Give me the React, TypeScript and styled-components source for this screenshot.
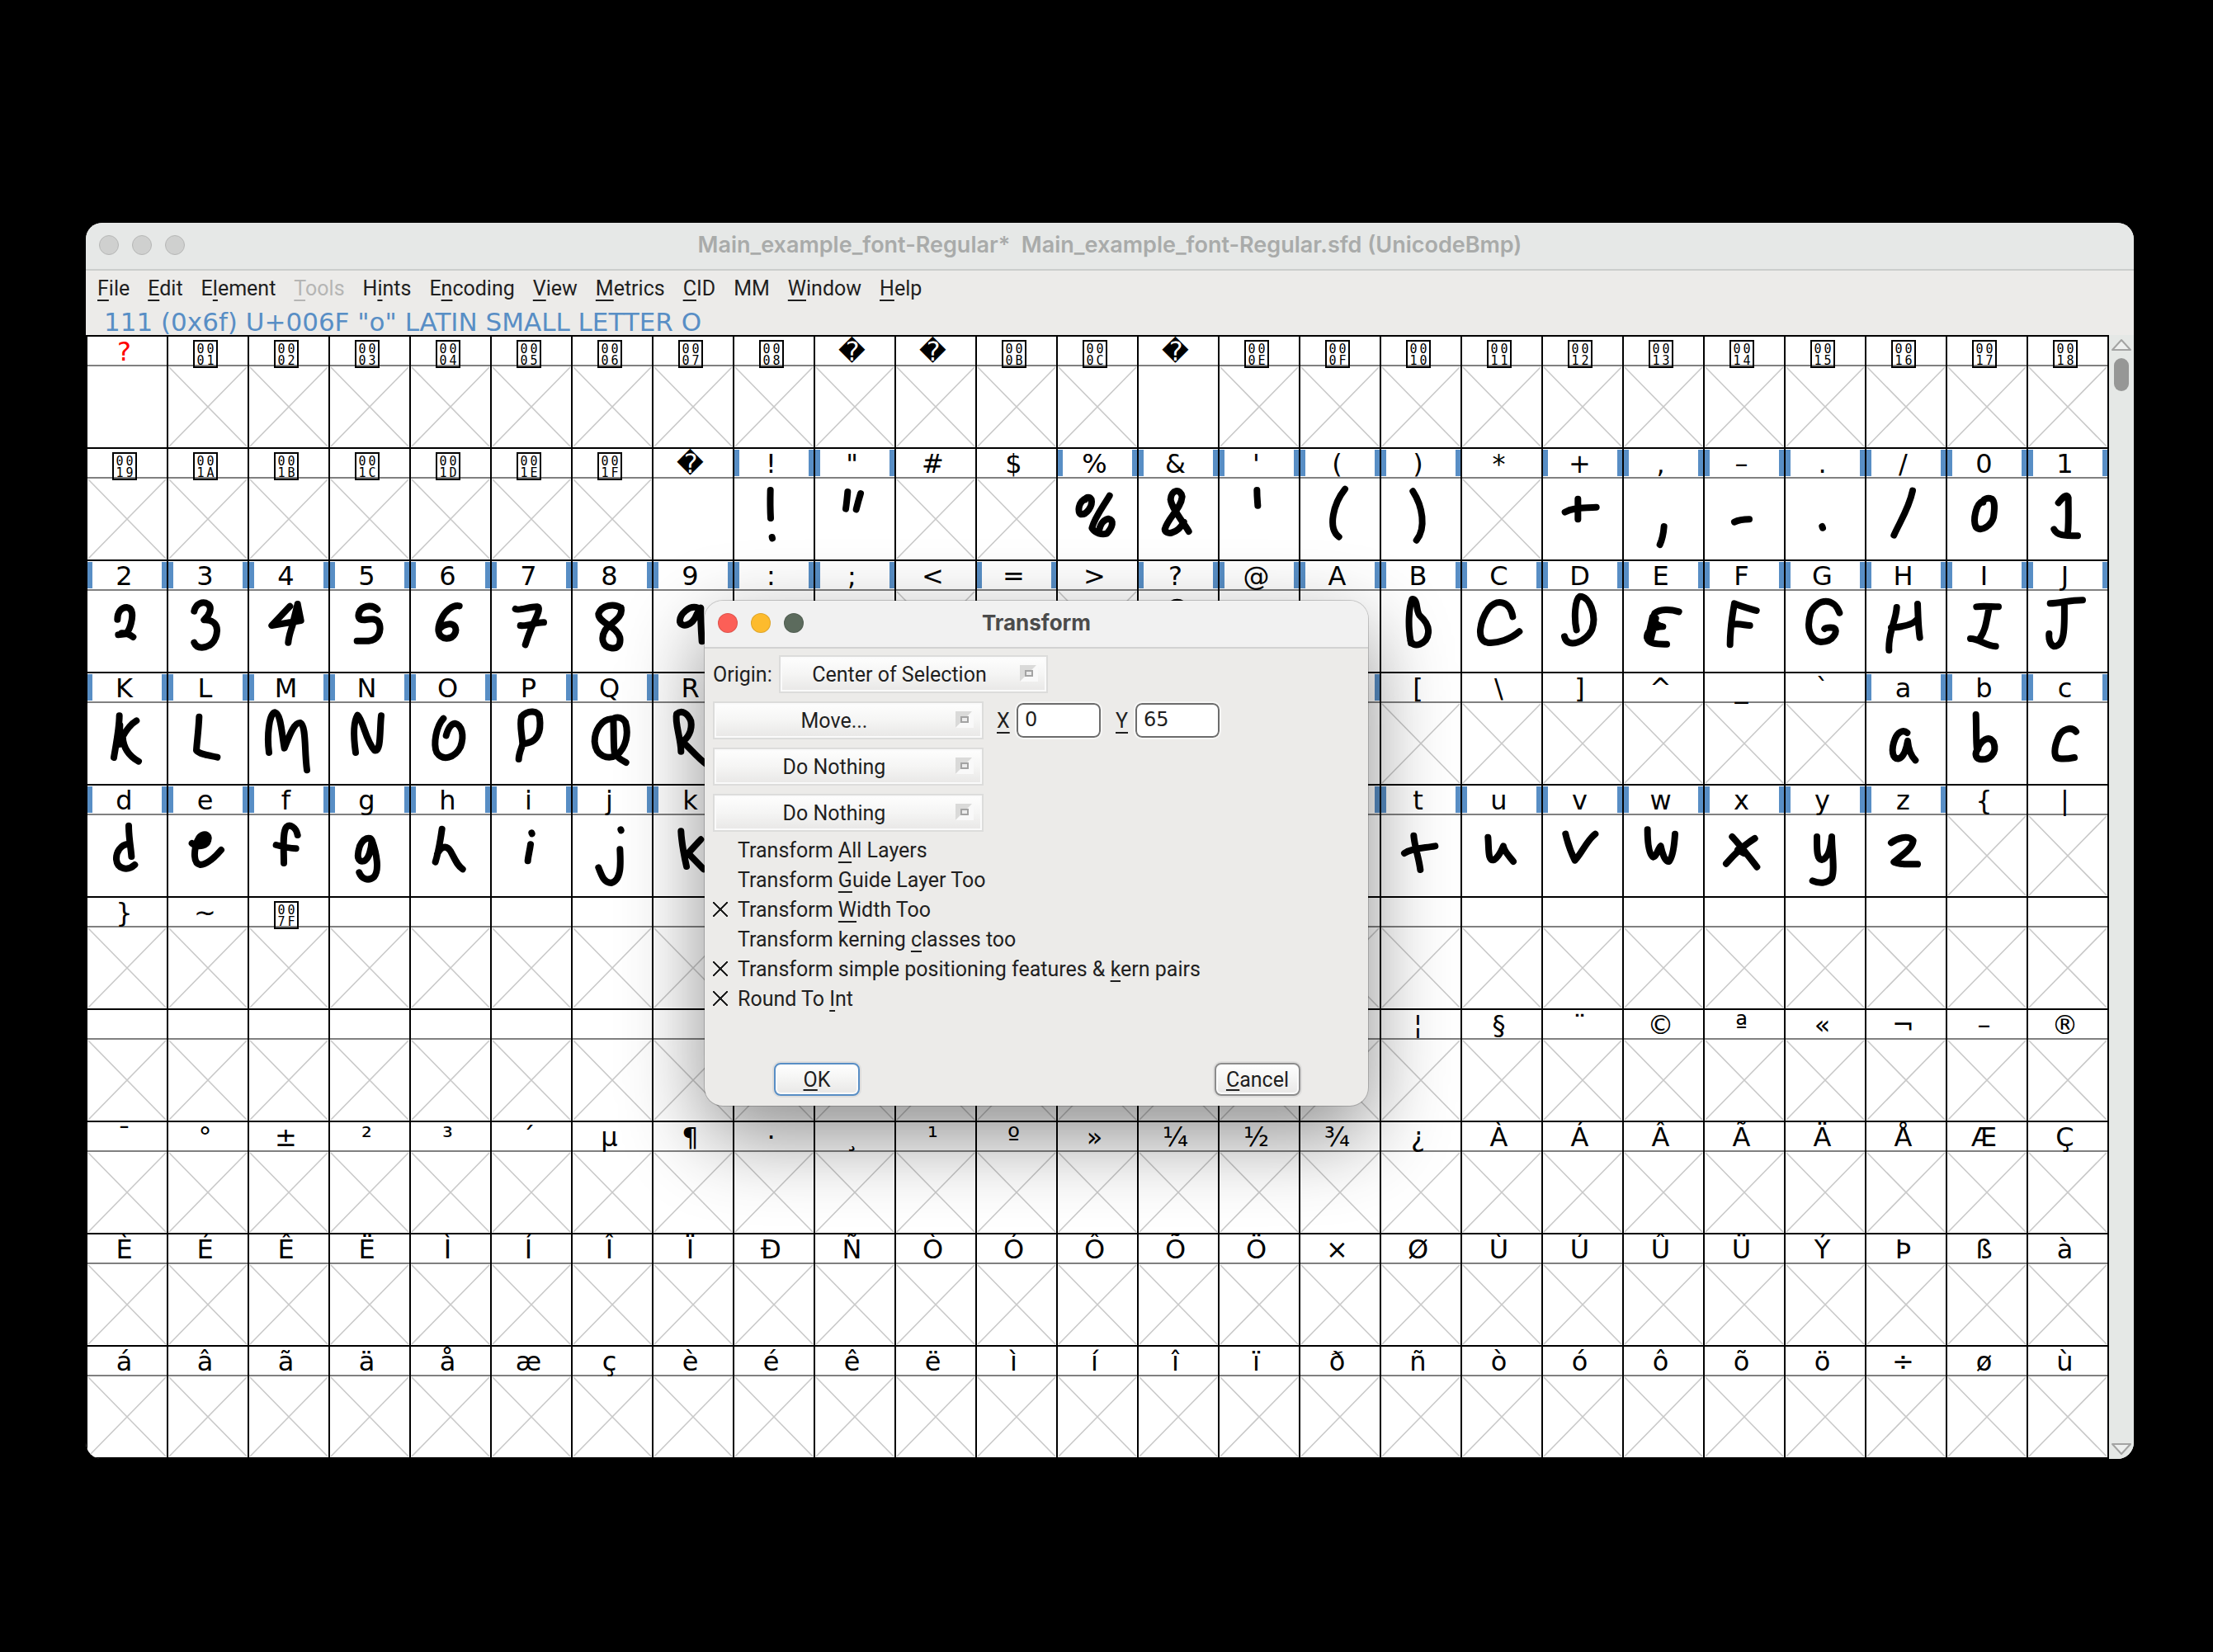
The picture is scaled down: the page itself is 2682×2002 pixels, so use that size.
import React from 'react';
import styled, { createGlobalStyle, css } from 'styled-components';

const ink = '#1f1f1f';
const panel = '#ecebe9';
const accent = '#588ec5';
const uiFont = 'Roboto, "Liberation Sans", sans-serif';
const titleFont = 'Inter, "Liberation Sans", sans-serif';
const glyphFont = '"DejaVu Sans", "Noto Sans", sans-serif';

const GlobalStyle = createGlobalStyle`
  *, *::before, *::after { box-sizing: border-box; }
  body { margin: 0; background: #000; color: ${ink}; font-family: ${uiFont}; font-size: 25px; }
  button, input, select { font: inherit; color: inherit; margin: 0; }
  u { text-decoration-thickness: 2px; text-underline-offset: 5px; text-decoration-skip-ink: none; }
`;

const Desktop = styled.main`
  min-height: 100vh;
  padding: 270px 96px 234px 104px;
`;

const AppWindow = styled.section`
  position: relative;
  border-radius: 20px;
  overflow: hidden;
  background: ${panel};
`;

const TitleBar = styled.header<{ $active?: boolean }>`
  display: grid;
  grid-template-columns: 1fr auto 1fr;
  align-items: center;
  height: 58px;
  padding: 0 16px 2px;
  border-bottom: 2px solid ${(p) => (p.$active ? '#d2d2d2' : '#cbcdcc')};
  background: ${(p) => (p.$active ? '#f1f1f1' : '#e6e8e7')};
`;

const Title = styled.h1<{ $active?: boolean }>`
  margin: 0;
  font: 600 27px/32px ${titleFont};
  white-space: pre;
  color: #a9abaa;
  ${(p) =>
    p.$active &&
    css`
      font-size: 26px;
      font-weight: 700;
      color: #4b4b4b;
    `}
`;

const Lights = styled.div`
  display: flex;
  gap: 16px;
`;

const Light = styled.button<{ $color?: string }>`
  width: 24px;
  height: 24px;
  padding: 0;
  border: 1px solid ${(p) => (p.$color ? 'rgba(0, 0, 0, 0.12)' : '#b6b7b6')};
  border-radius: 50%;
  background: ${(p) => p.$color ?? '#cfd0cf'};
`;

const MenuBar = styled.nav`
  display: flex;
  align-items: center;
  gap: 22px;
  height: 47px;
  padding: 0 12px 4px 14px;
`;

const MenuItem = styled.button`
  padding: 0;
  border: 0;
  background: none;
  line-height: 32px;
  &:disabled { color: #b5b5b4; }
`;

const GlyphInfo = styled.p`
  margin: 0;
  padding-left: 22px;
  font: 31px/31px ${glyphFont};
  color: ${accent};
`;

const Content = styled.div`
  display: grid;
  grid-template-columns: 1fr 30px;
`;

const GlyphGrid = styled.div`
  display: grid;
  grid-template-columns: repeat(25, minmax(0, 1fr));
  padding-left: 2px;
  border-bottom: 2px solid #000;
  background: #000;
`;

const Cell = styled.div`
  border-top: 2px solid #000;
  border-right: 2px solid #000;
  background: #fff;
`;

const CellLabel = styled.div<{ $changed: boolean; $missing: boolean }>`
  position: relative;
  display: flex;
  justify-content: center;
  height: 36px;
  padding-right: 7px;
  border-bottom: 2px solid #808080;
  font: 32px/36px ${glyphFont};
  color: ${(p) => (p.$missing ? '#f00' : '#000')};
  background: ${(p) =>
    p.$changed
      ? `linear-gradient(${accent}, ${accent}) 0 1px / 6px 32px no-repeat,
         linear-gradient(${accent}, ${accent}) 100% 1px / 6px 32px no-repeat`
      : 'none'};
`;

const HexBox = styled.span`
  position: absolute;
  top: 4px;
  left: calc(50% - 18px);
  display: grid;
  grid-template-columns: 12px 12px;
  grid-auto-rows: 14px;
  justify-content: center;
  justify-items: center;
  width: 30px;
  height: 34px;
  padding-top: 2px;
  border: 2px solid #000;
  font: 15px/14px "DejaVu Sans Mono", "Liberation Mono", monospace;
`;

const Drawing = styled.svg`
  display: block;
  width: 100%;
  height: 98px;
`;

const ScrollBar = styled.div`
  display: flex;
  flex-direction: column;
  align-items: center;
  padding: 4px 0;
  background: #e5e8e6;
`;

const ScrollThumb = styled.div`
  width: 18px;
  height: 40px;
  margin: 8px 0 auto;
  border-radius: 9px;
  background: #969796;
`;

const Dialog = styled.section`
  position: absolute;
  top: 458px;
  left: 750px;
  width: 804px;
  border-radius: 22px;
  background: ${panel};
  box-shadow: 0 0 0 1px rgba(0, 0, 0, 0.18), 0 36px 100px rgba(0, 0, 0, 0.45);
`;

const DialogTitleBar = styled(TitleBar)`
  border-radius: 22px 22px 0 0;
`;

const DialogBody = styled.form`
  display: flex;
  flex-direction: column;
  gap: 10px;
  padding: 8px 10px 12px;
`;

const Field = styled.div`
  display: flex;
  align-items: center;
`;

const OriginLabel = styled.label`
  width: 80px;
`;

const SelectFrame = styled.div<{ $width: number }>`
  position: relative;
  width: ${(p) => p.$width}px;
`;

const DropDown = styled.select`
  display: block;
  appearance: none;
  width: 100%;
  height: 46px;
  padding: 0 42px 0 8px;
  border: 2px solid #dcdcdb;
  border-radius: 0;
  box-shadow: inset 0 0 0 2px #fafafa;
  background: linear-gradient(#fefefe, #f5f5f4 50%, #e8e7e6);
  text-align: center;
  text-align-last: center;
`;

const SelectMark = styled.svg`
  position: absolute;
  top: 12px;
  right: 12px;
  pointer-events: none;
`;

const AxisLabel = styled.label`
  width: 24px;
  margin-left: 16px;
`;

const NumberBox = styled.input`
  width: 102px;
  height: 42px;
  margin-right: 2px;
  padding: 0 8px 2px;
  border: 2px solid #6c6c6c;
  border-radius: 8px;
  outline: 2px solid #f6f6f5;
  background: #fff;
  font: 24px/32px ${glyphFont};
`;

const CheckList = styled.div`
  display: flex;
  flex-direction: column;
  margin: -6px 0 50px;
`;

const CheckRow = styled.label`
  display: flex;
  align-items: center;
  gap: 12px;
  height: 36px;
  white-space: pre;
`;

const CheckBox = styled.input`
  appearance: none;
  width: 18px;
  height: 18px;
  &:checked {
    background:
      linear-gradient(45deg, transparent 46%, ${ink} 47%, ${ink} 53%, transparent 54%),
      linear-gradient(-45deg, transparent 46%, ${ink} 47%, ${ink} 53%, transparent 54%);
  }
`;

const Actions = styled.div`
  display: flex;
  justify-content: space-between;
  padding: 0 72px 0 74px;
`;

const PushButton = styled.button<{ $primary?: boolean }>`
  width: 104px;
  height: 40px;
  padding: 2px 0 0;
  border: 2px solid ${(p) => (p.$primary ? accent : '#8c8c8c')};
  border-radius: 8px;
  box-shadow: inset 0 0 0 2px #fbfbfb, 0 0 0 2px #dedddc;
  background: linear-gradient(#fff, #f4f4f3 50%, #e8e7e6);
  line-height: 34px;
  u { text-underline-offset: 3px; }
`;

/* Pen strokes of the drawn glyphs, in thirds of a pixel of the cell body. */
const STROKES: Record<string, string> = {
  '!': 'M131 42C130 80 130 110 132 144M137 213L138 217',
  '"': 'M118 48C116 70 114 90 111 110M165 54C160 70 154 92 149 112',
  '%': 'M102 72C74 84 70 124 84 130C104 132 128 100 122 76C116 66 104 66 100 76M188 62C166 100 134 140 124 180C136 200 160 204 178 200C200 176 206 150 184 146C164 150 154 170 150 188',
  '&': 'M182 192C164 160 120 110 116 76C118 40 152 34 158 66C154 110 108 140 95 184C96 206 140 204 164 158',
  "'": 'M136 42C136 66 138 84 139 98',
  '(': 'M162 38C120 90 98 180 140 212',
  ')': 'M115 46C150 100 164 180 128 224',
  '+': 'M127 74L127 148M80 122C110 104 150 108 194 104',
  ',': 'M146 174C144 200 140 220 131 240',
  '–': 'M108 158C124 150 140 148 162 148',
  '.': 'M133 174L135 179',
  '/': 'M168 44C154 110 120 160 100 206',
  '0': 'M130 82C104 90 92 150 104 176C124 196 160 170 168 140C172 110 174 84 162 74C146 68 130 74 130 86',
  '1': 'M110 88C122 74 140 50 146 70C146 120 148 160 144 196M94 184C104 206 130 208 180 208',
  '2': 'M109 104C109 78 122 60 143 60C165 62 166 90 158 120C152 142 145 152 138 157L112 160M124 154C140 152 155 160 166 168',
  '3': 'M94 74C100 46 126 36 144 48C162 62 148 90 130 106C160 104 178 120 177 145C175 185 150 205 122 206C108 206 98 198 94 188',
  '4': 'M148 56L82 126L188 108L176 48L162 104L174 100L176 48C170 110 146 140 142 188',
  '5': 'M172 68C158 50 126 52 110 70C98 90 102 106 124 106C150 102 172 98 180 122C186 150 176 178 140 182L98 182',
  '6': 'M176 55C150 50 124 76 112 100C94 134 94 170 130 173C160 172 168 145 160 130C148 114 118 122 106 136',
  '7': 'M86 66C100 74 140 56 166 58C180 62 160 100 146 130C136 154 128 176 122 196M104 126C130 130 160 114 189 115',
  '8': 'M176 62C150 44 104 52 94 84C94 118 160 126 172 170C176 200 160 212 140 208C108 204 100 170 120 140C146 112 184 96 176 62',
  '9': 'M162 62C130 50 94 86 96 112C102 134 140 130 158 84L172 62C170 110 174 150 176 184',
  '?': 'M112 62C124 34 156 34 168 62',
  B: 'M108 190C96 130 100 60 112 30C136 30 124 78 142 92C186 130 176 180 140 194C124 200 112 196 106 180',
  C: 'M184 94C174 36 128 28 96 64C64 110 50 180 92 188C130 192 176 176 208 148',
  D: 'M122 142C112 100 116 30 134 20C170 20 196 90 178 140C160 184 88 214 78 166',
  E: 'M200 76C170 66 130 66 112 82C100 104 116 126 142 130C110 132 84 140 84 170C90 196 126 194 156 194M104 96L90 160M116 100L98 176',
  F: 'M92 196C92 140 100 90 108 46C130 56 160 64 188 72M102 122C130 118 146 126 164 126',
  G: 'M196 80C176 24 118 26 92 78C72 140 94 184 128 186C176 186 196 140 172 134C160 134 148 132 142 138',
  H: 'M110 60C108 110 78 150 82 216M90 134C120 132 164 128 182 106M186 48C188 100 188 130 194 170',
  I: 'M106 58C130 54 160 58 186 58M152 62C142 110 140 140 120 170M84 174C110 172 140 200 176 202',
  J: 'M80 46C120 44 150 34 198 34M132 44C130 110 140 200 94 202C80 196 74 176 76 156',
  K: 'M116 46C116 90 104 150 96 198M178 64C158 76 140 100 128 122C130 160 150 192 186 212M118 80L116 150',
  L: 'M112 50C110 100 104 140 102 172C116 188 150 190 178 197',
  M: 'M72 180C64 120 72 36 94 34C116 40 118 110 128 164C142 130 162 68 186 72C208 84 200 170 210 244',
  N: 'M93 180C86 130 84 70 100 44C120 60 130 140 162 172C186 180 180 100 186 46',
  O: 'M118 56C92 84 80 150 94 180C116 212 160 200 180 160C196 116 184 80 160 74C144 76 134 96 128 118',
  P: 'M98 204C98 186 106 170 112 150C110 110 100 80 108 50C130 24 172 26 174 54C180 100 170 146 112 148',
  Q: 'M140 58C104 60 80 100 80 140C84 196 130 206 160 190C196 160 204 110 192 70C176 44 148 52 148 60C150 110 148 150 152 180C164 200 176 206 194 216',
  R: 'M100 176C100 130 76 70 84 40C104 22 126 40 136 66C142 100 124 130 104 140C130 160 160 200 192 222',
  a: 'M148 108C132 94 112 108 104 130C88 170 94 206 118 202C140 194 148 150 150 138C152 160 160 190 178 208',
  b: 'M104 42C106 90 104 140 108 170C124 134 150 116 168 142C184 184 150 210 118 204C100 200 100 180 112 166',
  c: 'M174 104C158 84 122 94 110 124C94 160 90 200 114 202C130 204 150 202 168 198',
  d: 'M150 38C150 80 158 120 160 150M150 104C120 106 104 134 105 160C108 196 146 204 172 180',
  e: 'M86 102C110 120 146 112 146 82C142 62 116 68 106 92C92 130 90 176 116 180C144 178 170 152 192 126M112 98L134 88',
  f: 'M176 72C170 42 148 32 136 42C120 60 126 120 126 174M98 108C120 114 148 120 170 121',
  g: 'M152 92C146 74 120 84 108 112C96 150 100 172 124 166C142 158 150 120 152 90C170 140 180 200 160 224C138 242 114 230 106 208',
  h: 'M113 50C106 100 98 140 89 170M96 140C110 112 130 108 144 130C160 160 168 182 188 196',
  i: 'M145 64L146 67M141 106C138 130 132 150 131 166',
  j: 'M175 52L176 55M172 124C174 170 180 236 140 246C112 246 104 214 94 190',
  k: 'M100 58C102 100 112 150 120 186M172 88L126 138L182 196',
  t: 'M118 74C122 120 136 150 142 198M84 138C110 120 150 120 196 112',
  u: 'M94 80C98 120 92 170 116 162C136 150 146 120 150 112C152 130 172 150 186 168',
  v: 'M82 68C92 110 104 140 116 164C140 140 160 90 190 68',
  w: 'M86 52C86 100 90 140 106 152C120 150 124 120 134 112C140 140 150 170 164 168C180 150 184 100 186 68',
  x: 'M100 78C130 110 160 150 190 188M182 84C140 110 100 150 78 176M120 126L142 138',
  y: 'M114 78C114 120 112 160 132 162C154 156 164 120 168 78C168 130 180 200 168 228C152 250 120 248 98 238',
  z: 'M90 100C110 84 150 70 170 92C166 126 120 150 100 170C130 182 160 176 186 178',
};

type Glyph = { label: string; state: 'empty' | 'drawn' | 'blank' };

/* Tokens are separated by spaces: "x" = no outline, "b" = drawn, "n" = blank body; the rest is the label. */
const cells = (source: string): Glyph[] =>
  source.split(' ').map((token) => ({
    label: token.slice(1),
    state: token[0] === 'b' ? 'drawn' : token[0] === 'n' ? 'blank' : 'empty',
  }));

const range = (prefix: string, chars: string) => Array.from(chars).map((c) => prefix + c).join(' ');
const blanks = (count: number, prefix = 'x') => Array(count).fill(prefix).join(' ');

const GLYPHS = [
  'n? x0001 x0002 x0003 x0004 x0005 x0006 x0007 x0008 x\uFFFD x\uFFFD x000B x000C n\uFFFD x000E x000F x0010 x0011 x0012 x0013 x0014 x0015 x0016 x0017 x0018',
  'x0019 x001A x001B x001C x001D x001E x001F n\uFFFD b! b" x# x$ ' + range('b', "%&'()") + ' x* ' + range('b', '+,–./01'),
  range('b', '23456789:;') + ' x< b= x> ' + range('b', '?@ABCDEFGHIJ'),
  range('b', 'KLMNOPQR') + ' ' + blanks(8, 'b') + ' ' + range('x', '[\\]^_`') + ' ' + range('b', 'abc'),
  range('b', 'defghijk') + ' ' + blanks(8, 'b') + ' ' + range('b', 'tuvwxyz') + ' x{ x|',
  'x} x~ x007F ' + blanks(22),
  blanks(16) + ' ' + range('x', '¦§¨©ª«¬–®'),
  range('x', '¯°±²³´µ¶·¸¹º»¼½¾¿ÀÁÂÃÄÅÆÇ'),
  range('x', 'ÈÉÊËÌÍÎÏÐÑÒÓÔÕÖ×ØÙÚÛÜÝÞßà'),
  range('x', 'áâãäåæçèéêëìíîïðñòóôõö÷øù'),
].flatMap(cells);

function GlyphCell({ label, state, first }: Glyph & { first: boolean }) {
  return (
    <Cell>
      <CellLabel $changed={state === 'drawn'} $missing={first}>
        {label.length === 4 ? (
          <HexBox>
            {Array.from(label).map((digit, i) => (
              <span key={i}>{digit}</span>
            ))}
          </HexBox>
        ) : (
          label
        )}
      </CellLabel>
      {state === 'empty' && (
        <Drawing viewBox="0 0 96 98" preserveAspectRatio="none" aria-hidden>
          <path d="M1 1L95 97M95 1L1 97" stroke="#c9c9c9" strokeWidth="1.6" />
        </Drawing>
      )}
      {state === 'drawn' && (
        <Drawing viewBox="0 0 288 294" aria-hidden>
          <path d={STROKES[label] ?? ''} fill="none" stroke="#000" strokeWidth="24" strokeLinecap="round" strokeLinejoin="round" />
        </Drawing>
      )}
    </Cell>
  );
}

function Arrow({ down }: { down?: boolean }) {
  return (
    <svg width="26" height="16" viewBox="0 0 26 16" aria-hidden>
      <path
        d={down ? 'M2 2H24L13 14Z' : 'M2 14H24L13 2Z'}
        fill="#eef0ef"
        stroke="#a3a4a3"
        strokeWidth="2"
        strokeLinejoin="round"
      />
    </svg>
  );
}

function Choice({ id, value, width, name }: { id: string; value: string; width: number; name?: string }) {
  return (
    <SelectFrame $width={width}>
      <DropDown id={id} aria-label={name} defaultValue={value}>
        <option>{value}</option>
      </DropDown>
      <SelectMark width="22" height="20" viewBox="0 0 22 20" aria-hidden>
        <path d="M0 0H20L14 6H6V14L0 20Z" fill="#dadad9" />
        <path d="M22 0V20H0L6 14H16V6Z" fill="#f9f9f9" />
        <rect x="6" y="6" width="10" height="8" fill="#ececec" />
        <rect x="7" y="7" width="8" height="6" fill="none" stroke="#a3a3a3" strokeWidth="2" />
      </SelectMark>
    </SelectFrame>
  );
}

/* Underlines the mnemonic: the letter that follows an underscore. */
function Mnemonic({ text }: { text: string }) {
  const at = text.indexOf('_');
  if (at < 0) return <>{text}</>;
  return (
    <span>
      {text.slice(0, at)}
      <u>{text[at + 1]}</u>
      {text.slice(at + 2)}
    </span>
  );
}

const MENUS = ['_File', '_Edit', 'E_lement', '_Tools', 'H_ints', 'E_ncoding', '_View', '_Metrics', '_CID', 'MM', '_Window', '_Help'];

const OPTIONS: [string, boolean][] = [
  ['Transform _All Layers', false],
  ['Transform _Guide Layer Too', false],
  ['Transform _Width Too', true],
  ['Transform kerning _classes too', false],
  ['Transform simple positioning features & _kern pairs', true],
  ['Round To _Int', true],
];

export default function App() {
  return (
    <Desktop>
      <GlobalStyle />
      <AppWindow>
        <TitleBar>
          <Lights>
            <Light aria-label="Close" />
            <Light aria-label="Minimize" />
            <Light aria-label="Zoom" />
          </Lights>
          <Title>{'Main_example_font-Regular*  Main_example_font-Regular.sfd (UnicodeBmp)'}</Title>
        </TitleBar>
        <MenuBar>
          {MENUS.map((menu) => (
            <MenuItem key={menu} disabled={menu === '_Tools'}>
              <Mnemonic text={menu} />
            </MenuItem>
          ))}
        </MenuBar>
        <GlyphInfo>111 (0x6f) U+006F "o" LATIN SMALL LETTER O</GlyphInfo>
        <Content>
          <GlyphGrid>
            {GLYPHS.map((glyph, i) => (
              <GlyphCell key={i} first={i === 0} {...glyph} />
            ))}
          </GlyphGrid>
          <ScrollBar>
            <Arrow />
            <ScrollThumb />
            <Arrow down />
          </ScrollBar>
        </Content>
        <Dialog role="dialog" aria-label="Transform">
          <DialogTitleBar $active>
            <Lights>
              <Light $color="#fc5f57" aria-label="Close dialog" />
              <Light $color="#fdbb2d" aria-label="Minimize dialog" />
              <Light $color="#5c6b5d" aria-label="Zoom dialog" />
            </Lights>
            <Title as="h2" $active>
              Transform
            </Title>
          </DialogTitleBar>
          <DialogBody onSubmit={(event) => event.preventDefault()}>
            <Field>
              <OriginLabel htmlFor="origin">Origin:</OriginLabel>
              <Choice id="origin" value="Center of Selection" width={326} />
            </Field>
            <Field>
              <Choice id="first" name="First transformation" value="Move..." width={328} />
              <AxisLabel htmlFor="move-x">
                <u>X</u>
              </AxisLabel>
              <NumberBox id="move-x" defaultValue="0" />
              <AxisLabel htmlFor="move-y">
                <u>Y</u>
              </AxisLabel>
              <NumberBox id="move-y" defaultValue="65" />
            </Field>
            <Field>
              <Choice id="second" name="Second transformation" value="Do Nothing" width={328} />
            </Field>
            <Field>
              <Choice id="third" name="Third transformation" value="Do Nothing" width={328} />
            </Field>
            <CheckList>
              {OPTIONS.map(([text, checked]) => (
                <CheckRow key={text}>
                  <CheckBox type="checkbox" defaultChecked={checked} />
                  <Mnemonic text={text} />
                </CheckRow>
              ))}
            </CheckList>
            <Actions>
              <PushButton type="submit" $primary>
                <u>O</u>K
              </PushButton>
              <PushButton type="button">
                <u>C</u>ancel
              </PushButton>
            </Actions>
          </DialogBody>
        </Dialog>
      </AppWindow>
    </Desktop>
  );
}
